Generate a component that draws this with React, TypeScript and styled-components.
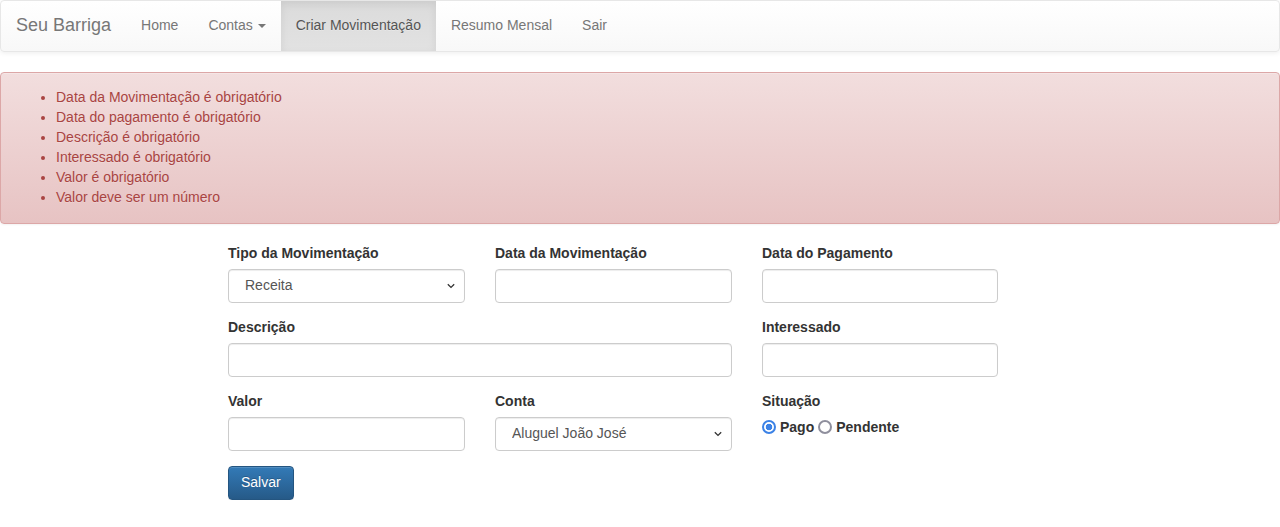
import React from "react";
import styled, { createGlobalStyle } from "styled-components";

const Global = createGlobalStyle`
  * { box-sizing: border-box; }
  html, body { margin: 0; padding: 0; background: #fff; }
  body {
    font-family: "Liberation Sans", Arial, Helvetica, sans-serif;
    font-size: 14px;
    line-height: 1.42857143;
    color: #333;
  }
`;

const Navbar = styled.nav`
  display: flex;
  align-items: stretch;
  min-height: 50px;
  margin-bottom: 20px;
  border: 1px solid #e7e7e7;
  border-radius: 4px;
  background-image: linear-gradient(to bottom, #fff 0, #f8f8f8 100%);
  box-shadow: inset 0 1px 0 rgba(255, 255, 255, 0.15), 0 1px 5px rgba(0, 0, 0, 0.075);
`;

const Brand = styled.a`
  display: block;
  height: 50px;
  padding: 14px 15px 16px;
  font-size: 18px;
  line-height: 20px;
  color: #777;
  text-decoration: none;
  text-shadow: 0 1px 0 rgba(255, 255, 255, 0.25);
`;

const NavList = styled.ul`
  display: flex;
  margin: 0;
  padding: 0;
  list-style: none;
`;

const NavItem = styled.li<{ $active?: boolean }>`
  display: block;
  a {
    display: block;
    padding: 14px 15px 16px;
    line-height: 20px;
    color: ${(p) => (p.$active ? "#555" : "#777")};
    text-decoration: none;
    text-shadow: 0 1px 0 rgba(255, 255, 255, 0.25);
    background-image: ${(p) =>
      p.$active ? "linear-gradient(to bottom, #dbdbdb 0, #e2e2e2 100%)" : "none"};
    box-shadow: ${(p) => (p.$active ? "inset 0 3px 9px rgba(0, 0, 0, 0.075)" : "none")};
  }
`;

const Caret = styled.span`
  display: inline-block;
  width: 0;
  height: 0;
  margin-left: 1px;
  vertical-align: middle;
  border-top: 4px solid #777;
  border-right: 4px solid transparent;
  border-left: 4px solid transparent;
`;

const Alert = styled.div`
  padding: 14px 15px 16px;
  margin-bottom: 20px;
  border: 1px solid #dca7a7;
  border-radius: 4px;
  color: #a94442;
  background-image: linear-gradient(to bottom, #f2dede 0, #e7c3c3 100%);
  text-shadow: 0 1px 0 rgba(255, 255, 255, 0.2);
  box-shadow: inset 0 1px 0 rgba(255, 255, 255, 0.25), 0 1px 2px rgba(0, 0, 0, 0.05);
  ul {
    margin: 0;
    padding-left: 40px;
  }
`;

const Form = styled.form`
  display: grid;
  grid-template-columns: 237px 237px 236px;
  column-gap: 30px;
  margin-left: 228px;
`;

const Group = styled.div<{ $span?: number }>`
  grid-column: span ${(p) => p.$span ?? 1};
  margin-bottom: 15px;
`;

const Label = styled.label`
  display: block;
  margin-top: -1px;
  margin-bottom: 6px;
  font-weight: bold;
`;

const Input = styled.input`
  display: block;
  width: 100%;
  height: 34px;
  padding: 6px 12px;
  font-family: inherit;
  font-size: 14px;
  color: #555;
  background: #fff;
  border: 1px solid #ccc;
  border-radius: 4px;
  box-shadow: inset 0 1px 1px rgba(0, 0, 0, 0.075);
  outline: none;
`;

const SelectWrap = styled.div`
  position: relative;
  svg {
    position: absolute;
    right: 10px;
    top: 14px;
    pointer-events: none;
  }
`;

const Select = styled.select`
  display: block;
  width: 100%;
  height: 34px;
  padding: 5px 12px 7px 16px;
  font-family: inherit;
  font-size: 14px;
  color: #555;
  background: #fff;
  border: 1px solid #ccc;
  border-radius: 4px;
  box-shadow: inset 0 1px 1px rgba(0, 0, 0, 0.075);
  appearance: none;
  outline: none;
`;

const RadioLine = styled.div`
  display: flex;
  align-items: center;
  font-weight: bold;
  margin-top: 6px;
  label {
    display: inline-flex;
    align-items: center;
  }
  label + label {
    margin-left: 4px;
  }
`;

const Radio = styled.input.attrs({ type: "radio" })`
  appearance: none;
  width: 14px;
  height: 14px;
  margin: 0 4px 0 0;
  border-radius: 50%;
  border: 2px solid #8f8f9d;
  background: #fff;
  &:checked {
    border-color: #3b82e6;
    background: radial-gradient(circle, #3b82e6 0, #3b82e6 3px, #fff 3.6px);
  }
`;

const Button = styled.button`
  grid-column: 1 / 2;
  justify-self: start;
  padding: 5px 12px 7px;
  font-family: inherit;
  font-size: 14px;
  line-height: 1.42857143;
  color: #fff;
  border: 1px solid #245580;
  border-radius: 4px;
  background-image: linear-gradient(to bottom, #337ab7 0, #265a88 100%);
  text-shadow: 0 -1px 0 rgba(0, 0, 0, 0.2);
  box-shadow: inset 0 1px 0 rgba(255, 255, 255, 0.15), 0 1px 1px rgba(0, 0, 0, 0.075);
  cursor: pointer;
`;

const Chevron = () => (
  <svg width="8" height="6" viewBox="0 0 8 6">
    <polyline points="0.8,1.2 4,4.4 7.2,1.2" fill="none" stroke="#333" strokeWidth="1.3" />
  </svg>
);

const errors = [
  "Data da Movimentação é obrigatório",
  "Data do pagamento é obrigatório",
  "Descrição é obrigatório",
  "Interessado é obrigatório",
  "Valor é obrigatório",
  "Valor deve ser um número",
];

export default function App() {
  return (
    <>
      <Global />
      <Navbar>
        <Brand href="#">Seu Barriga</Brand>
        <NavList>
          <NavItem><a href="#">Home</a></NavItem>
          <NavItem><a href="#">Contas <Caret /></a></NavItem>
          <NavItem $active><a href="#">Criar Movimentação</a></NavItem>
          <NavItem><a href="#">Resumo Mensal</a></NavItem>
          <NavItem><a href="#">Sair</a></NavItem>
        </NavList>
      </Navbar>
      <Alert>
        <ul>
          {errors.map((e) => (
            <li key={e}>{e}</li>
          ))}
        </ul>
      </Alert>
      <Form onSubmit={(e) => e.preventDefault()}>
        <Group>
          <Label>Tipo da Movimentação</Label>
          <SelectWrap>
            <Select defaultValue="REC">
              <option value="REC">Receita</option>
              <option value="DESP">Despesa</option>
            </Select>
            <Chevron />
          </SelectWrap>
        </Group>
        <Group>
          <Label>Data da Movimentação</Label>
          <Input type="text" />
        </Group>
        <Group>
          <Label>Data do Pagamento</Label>
          <Input type="text" />
        </Group>
        <Group $span={2}>
          <Label>Descrição</Label>
          <Input type="text" />
        </Group>
        <Group>
          <Label>Interessado</Label>
          <Input type="text" />
        </Group>
        <Group>
          <Label>Valor</Label>
          <Input type="text" />
        </Group>
        <Group>
          <Label>Conta</Label>
          <SelectWrap>
            <Select defaultValue="1">
              <option value="1">Aluguel João José</option>
            </Select>
            <Chevron />
          </SelectWrap>
        </Group>
        <Group>
          <Label>Situação</Label>
          <RadioLine>
            <label><Radio name="status" defaultChecked />Pago</label>
            <label><Radio name="status" />Pendente</label>
          </RadioLine>
        </Group>
        <Button type="submit">Salvar</Button>
      </Form>
    </>
  );
}
